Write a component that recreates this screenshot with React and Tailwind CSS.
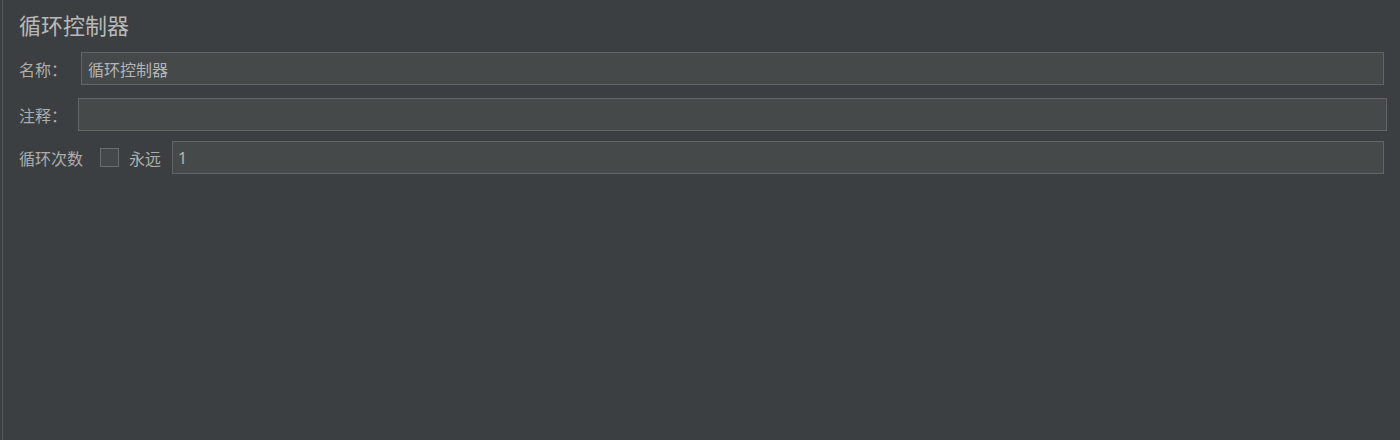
const font = { fontFamily: '"Noto Sans CJK SC", "Noto Sans", sans-serif' };

function Field({ label, labelWidth, value, right, className = '' }) {
  return (
    <div className={`flex items-center ${className}`} style={{ paddingRight: right }}>
      <span className="shrink-0 text-[16px] text-[#adadad]" style={{ width: labelWidth }}>
        {label}
      </span>
      <div className="flex h-[33px] flex-1 items-center border border-[#626465] bg-[#45494a] pl-[6px] text-[16px] text-[#b4b4b4]">
        {value}
      </div>
    </div>
  );
}

export default function App() {
  return (
    <div className="h-[440px] w-[1400px] bg-[#3c3f41]" style={font}>
      <div className="ml-[2px] h-full border-l border-[#56585a] pl-[16px]">
        <div className="pt-[9px] text-[22px] leading-[30px] text-[#b9b9b9]">循环控制器</div>

        <Field className="mt-[13px]" label="名称：" labelWidth={62} value="循环控制器" right={16} />
        <Field className="mt-[13px]" label="注释：" labelWidth={59} value="" right={13} />

        <div className="mt-[10px] flex items-center pr-[16px]">
          <span className="shrink-0 text-[16px] text-[#adadad]">循环次数</span>
          <span className="ml-[17px] h-[19px] w-[19px] shrink-0 border border-[#6a6c6d] bg-[#43494a]" />
          <span className="ml-[10px] shrink-0 text-[16px] text-[#adadad]">永远</span>
          <div
            className="ml-[11px] flex h-[33px] flex-1 items-center border border-[#626465] bg-[#45494a] pl-[5px] text-[16px] text-[#b4b4b4]"
            style={{ fontFamily: '"Noto Sans", sans-serif' }}
          >
            1
          </div>
        </div>
      </div>
    </div>
  );
}
